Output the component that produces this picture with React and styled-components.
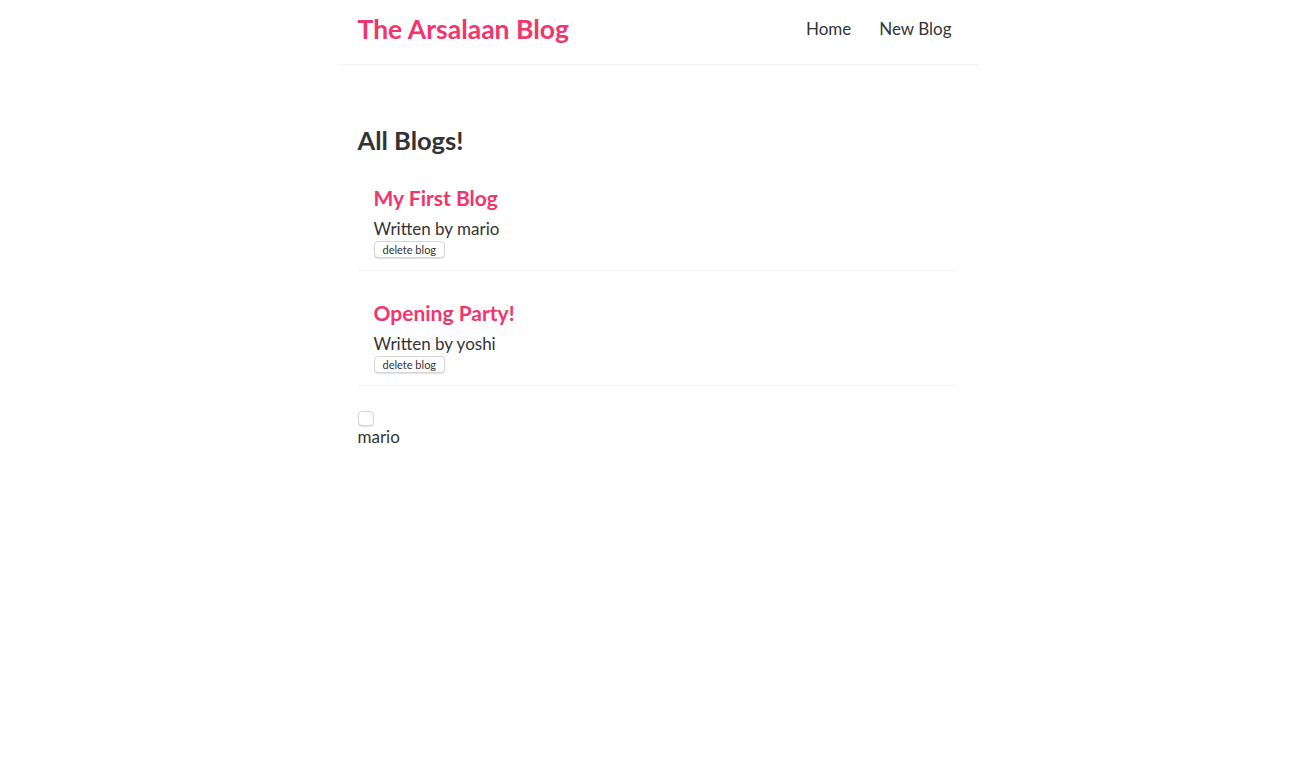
import React, { useState } from "react";
import styled, { createGlobalStyle } from "styled-components";

const GlobalStyle = createGlobalStyle`
  * {
    margin: 0;
    box-sizing: border-box;
  }
  body {
    margin: 0;
    background: #fff;
    font-family: "Lato", "Noto Sans", sans-serif;
    color: #333;
  }
`;

const Nav = styled.nav`
  max-width: 640px;
  margin: 0 auto;
  padding: 14px 20px 20px;
  display: flex;
  align-items: center;
  border-bottom: 1px solid #f2f2f2;
`;

const Brand = styled.h1`
  font-size: 26.5px;
  line-height: 30px;
  font-weight: 700;
  color: #f1356d;
`;

const Links = styled.div`
  margin-left: auto;
  display: flex;
`;

const NavLink = styled.a`
  margin-left: 16px;
  padding: 6px;
  font-size: 17px;
  line-height: 18px;
  color: #333;
  text-decoration: none;
  cursor: pointer;
`;

const Content = styled.main`
  max-width: 640px;
  margin: 41px auto;
  padding: 20px;
`;

const Heading = styled.h2`
  font-size: 25.5px;
  line-height: 28px;
  padding-bottom: 2px;
  font-weight: 700;
  color: #333;
`;

const Preview = styled.div`
  padding: 9px 16px 12px;
  margin: 20px 0;
  border-bottom: 1px solid #f4f4f4;
`;

const PreviewTitle = styled.h2`
  font-size: 21px;
  line-height: 26px;
  font-weight: 700;
  color: #f1356d;
  margin-bottom: 8px;
`;

const Author = styled.p`
  font-size: 17px;
  line-height: 20px;
  color: #333;
`;

const SmallButton = styled.button`
  display: block;
  margin-top: 2px;
  height: 17px;
  padding: 0 8px;
  font-family: "Lato", sans-serif;
  font-size: 11px;
  color: #333;
  background: #fff;
  border: 1px solid #d6d6d6;
  border-radius: 4px;
  box-shadow: 0 1px 1px rgba(0, 0, 0, 0.12);
  cursor: pointer;
`;

const Footer = styled.div`
  display: flex;
  flex-direction: column;
  align-items: flex-start;
`;

const EmptyButton = styled(SmallButton)`
  width: 16px;
  height: 15px;
  margin-top: 5px;
  padding: 0;
  border-radius: 4px;
`;

const Name = styled.p`
  font-size: 17px;
  line-height: 20px;
  margin-top: 1px;
`;

const initialBlogs = [
  { id: 1, title: "My First Blog", author: "mario" },
  { id: 2, title: "Opening Party!", author: "yoshi" },
];

const App = () => {
  const [blogs, setBlogs] = useState(initialBlogs);

  const handleDelete = (id) => {
    setBlogs(blogs.filter((blog) => blog.id !== id));
  };

  return (
    <>
      <GlobalStyle />
      <Nav>
        <Brand>The Arsalaan Blog</Brand>
        <Links>
          <NavLink href="#">Home</NavLink>
          <NavLink href="#">New Blog</NavLink>
        </Links>
      </Nav>
      <Content>
        <Heading>All Blogs!</Heading>
        {blogs.map((blog) => (
          <Preview key={blog.id}>
            <PreviewTitle>{blog.title}</PreviewTitle>
            <Author>Written by {blog.author}</Author>
            <SmallButton onClick={() => handleDelete(blog.id)}>delete blog</SmallButton>
          </Preview>
        ))}
        <Footer>
          <EmptyButton />
          <Name>mario</Name>
        </Footer>
      </Content>
    </>
  );
};

export default App;
